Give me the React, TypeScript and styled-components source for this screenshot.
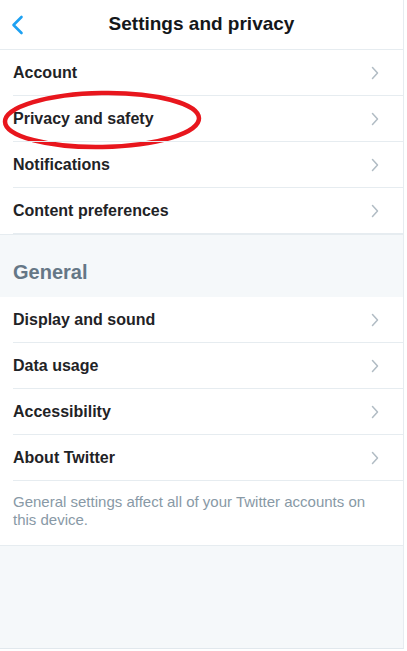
import React from "react";
import styled, { createGlobalStyle } from "styled-components";

const GlobalStyle = createGlobalStyle`
  html, body {
    margin: 0;
    padding: 0;
    background: #ffffff;
  }
  body {
    font-family: "Liberation Sans", Arial, sans-serif;
    -webkit-font-smoothing: antialiased;
  }
`;

const Screen = styled.div`
  width: 403px;
  min-height: 648px;
  background: #f5f8fa;
  border-right: 1px solid #e6ecf0;
  border-bottom: 1px solid #e1e8ed;
  display: flex;
  flex-direction: column;
`;

const Header = styled.header`
  height: 49px;
  background: #ffffff;
  display: grid;
  grid-template-columns: 48px 1fr 48px;
  align-items: center;
  border-bottom: 1px solid #e6ecf0;
`;

const BackButton = styled.button`
  border: 0;
  background: none;
  padding: 0 0 0 11px;
  height: 48px;
  display: flex;
  align-items: center;
  cursor: pointer;
`;

const Title = styled.h1`
  margin: 0 0 1px;
  text-align: center;
  font-size: 19px;
  font-weight: 700;
  color: #14171a;
`;

const Group = styled.section`
  background: #ffffff;
  display: flex;
  flex-direction: column;
`;

const Row = styled.div`
  position: relative;
  height: 46px;
  display: flex;
  align-items: center;
  justify-content: space-between;
  padding: 0 24px 0 13px;
  &::after {
    content: "";
    position: absolute;
    left: 13px;
    right: 0;
    bottom: 0;
    height: 1px;
    background: #e6ecf0;
  }
`;

const Label = styled.span`
  font-size: 16px;
  font-weight: 700;
  color: #1f2326;
`;

const SectionHeading = styled.h2`
  margin: 0;
  padding: 26px 13px 13px;
  font-size: 20px;
  font-weight: 700;
  color: #657786;
  border-top: 1px solid #e6ecf0;
`;

const Note = styled.p`
  margin: 0;
  padding: 12px 13px 16px;
  font-size: 15px;
  line-height: 18px;
  color: #8899a6;
  border-bottom: 1px solid #e6ecf0;
`;

const Mark = styled.svg`
  position: absolute;
  left: 1px;
  top: -7px;
  pointer-events: none;
`;

const Chevron = () => (
  <svg width="8" height="14" viewBox="0 0 8 14">
    <path d="M1.5 1.5 L6.5 7 L1.5 12.5" fill="none" stroke="#b1bcc4" strokeWidth="1.5" strokeLinecap="round" strokeLinejoin="round" />
  </svg>
);

const BackIcon = () => (
  <svg width="13" height="20" viewBox="0 0 13 20">
    <path d="M10.5 2 L2.5 10 L10.5 18" fill="none" stroke="#1da1f2" strokeWidth="2.6" strokeLinecap="round" strokeLinejoin="round" />
  </svg>
);

const top = ["Account", "Privacy and safety", "Notifications", "Content preferences"];
const general = ["Display and sound", "Data usage", "Accessibility", "About Twitter"];

export default function App() {
  return (
    <>
      <GlobalStyle />
      <Screen>
        <Header>
          <BackButton aria-label="Back">
            <BackIcon />
          </BackButton>
          <Title>Settings and privacy</Title>
          <span />
        </Header>
        <Group>
          {top.map((item) => (
            <Row key={item}>
              <Label>{item}</Label>
              <Chevron />
              {item === "Privacy and safety" && (
                <Mark width="204" height="64" viewBox="0 0 204 64">
                  <ellipse cx="101" cy="31" rx="97" ry="27" fill="none" stroke="#e8161d" strokeWidth="4.5" transform="rotate(-1 101 31)" />
                </Mark>
              )}
            </Row>
          ))}
        </Group>
        <SectionHeading>General</SectionHeading>
        <Group>
          {general.map((item) => (
            <Row key={item}>
              <Label>{item}</Label>
              <Chevron />
            </Row>
          ))}
          <Note>General settings affect all of your Twitter accounts on this device.</Note>
        </Group>
      </Screen>
    </>
  );
}
